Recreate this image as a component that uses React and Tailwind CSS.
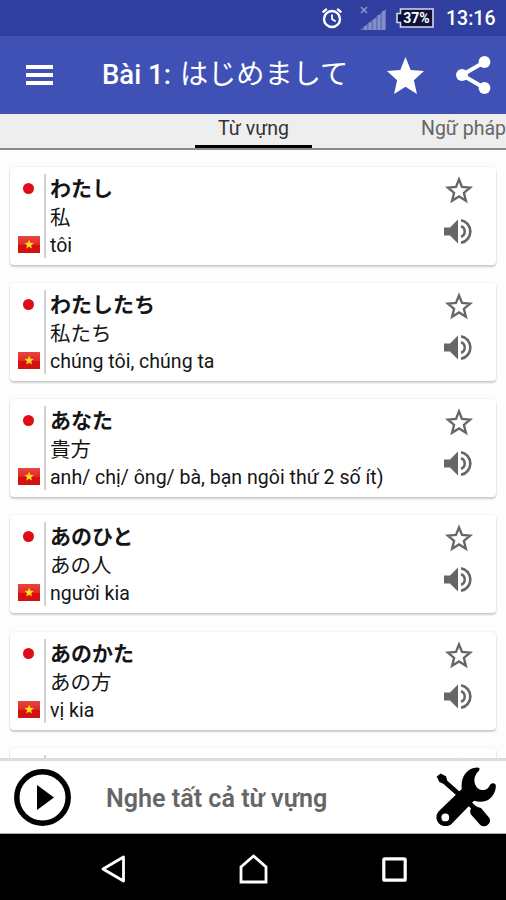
const words = [
  { kana: "わたし", kanji: "私", meaning: "tôi" },
  { kana: "わたしたち", kanji: "私たち", meaning: "chúng tôi, chúng ta" },
  { kana: "あなた", kanji: "貴方", meaning: "anh/ chị/ ông/ bà, bạn ngôi thứ 2 số ít)" },
  { kana: "あのひと", kanji: "あの人", meaning: "người kia" },
  { kana: "あのかた", kanji: "あの方", meaning: "vị kia" },
  { kana: "", kanji: "", meaning: "" },
];

const STAR =
  "M12 17.27L18.18 21l-1.64-7.03L22 9.24l-7.19-.61L12 2 9.19 8.63 2 9.24l5.46 4.73L5.82 21z";

function StatusBar() {
  return (
    <div className="flex h-9 shrink-0 items-center justify-end bg-[#303f9f] pr-[10px] text-white">
      <svg className="h-[22px] w-[22px]" viewBox="0 0 22 22" fill="none" stroke="currentColor">
        <circle cx="11" cy="12" r="8" strokeWidth="2.4" />
        <path d="M1.6 5.4l4.2-3.6M20.4 5.4l-4.2-3.6" strokeWidth="2.2" />
        <path d="M11 7.5V12l3.6 2.6" strokeWidth="1.8" />
      </svg>
      <svg className="ml-[17px] h-[26px] w-[27px]" viewBox="0 0 27 26">
        <path d="M1 2l6 6M7 2L1 8" stroke="#8f98cd" strokeWidth="1.5" />
        <path d="M0 25L26 4v21z" fill="#6672b9" />
        <path
          d="M5.5 21v4M10 17.5v7.5M14.5 14v11M19 10v15M23.5 6v19"
          stroke="#8791c9"
          strokeWidth="2.6"
        />
      </svg>
      <div className="relative ml-[9px] flex h-[20px] w-[38px] items-center justify-center">
        <svg className="absolute inset-0" width="38" height="20" viewBox="0 0 38 20">
          <path
            d="M4.5 1H37v18H4.5v-4.5H1v-9h3.5z"
            fill="#0e1238"
            stroke="#d3d7ee"
            strokeWidth="1.6"
          />
        </svg>
        <span className="relative pl-[3px] text-[14px] leading-none font-bold">37%</span>
      </div>
      <span className="ml-[12px] w-[50px] pt-px text-[19.5px] leading-none font-medium whitespace-nowrap">
        13:16
      </span>
    </div>
  );
}

function AppBar() {
  return (
    <header className="flex h-[78px] shrink-0 items-center bg-[#3f51b5] pr-[15px] pl-[26px] text-white">
      <div className="flex w-[27px] flex-col gap-[4.5px]">
        <div className="h-[3.5px] bg-white" />
        <div className="h-[3.5px] bg-white" />
        <div className="h-[3.5px] bg-white" />
      </div>
      <h1 className="ml-[49px] flex flex-1 items-baseline pt-px text-[27.5px] leading-none font-medium whitespace-nowrap">
        Bài 1:
        <span className="ml-[9px] text-[28.2px] font-normal">はじめまして</span>
      </h1>
      <svg className="h-[37px] w-[37px]" viewBox="2 2 20 19" preserveAspectRatio="none" fill="currentColor">
        <path d={STAR} />
      </svg>
      <svg className="ml-[32px] h-[38px] w-[35px]" viewBox="0 0 35 38" fill="currentColor">
        <path d="M28.5 6L6 19l22.5 13" fill="none" stroke="currentColor" strokeWidth="4" />
        <circle cx="28.5" cy="6" r="5.9" />
        <circle cx="6" cy="19" r="6" />
        <circle cx="28.5" cy="32" r="5.9" />
      </svg>
    </header>
  );
}

function Tabs() {
  return (
    <nav className="flex h-9 shrink-0 overflow-hidden border-b-2 border-[#8b8b8b] bg-[#eee] pl-[195px] text-[19.5px] leading-[30px] whitespace-nowrap">
      <div className="flex w-[117px] shrink-0 flex-col border-b-3 border-black text-center text-[#333]">
        Từ vựng
      </div>
      <div className="ml-[109px] shrink-0 text-[#666]">Ngữ pháp</div>
    </nav>
  );
}

function VietnamFlag() {
  return (
    <svg className="h-[17px] w-[22px]" viewBox="0 0 22 17">
      <defs>
        <linearGradient id="flag" x1="0" y1="0" x2="0" y2="1">
          <stop offset="0" stopColor="#e8453f" />
          <stop offset="0.5" stopColor="#e12a26" />
          <stop offset="0.55" stopColor="#d90d0d" />
          <stop offset="1" stopColor="#cf1414" />
        </linearGradient>
      </defs>
      <rect width="22" height="17" fill="url(#flag)" />
      <path d={STAR} fill="#ffd91a" transform="translate(5.6 2.8) scale(.46)" />
    </svg>
  );
}

function WordCard({ word }) {
  return (
    <div className="mb-[18.3px] flex h-[98px] shrink-0 rounded-[4px] bg-white shadow-[0_2px_2px_rgba(0,0,0,0.18),0_0_2px_rgba(0,0,0,0.12)]">
      <div className="flex w-[34px] flex-col items-center justify-between pt-4 pb-3 pl-[3px]">
        <div className="h-[11px] w-[11px] rounded-full bg-[#e00b18]" />
        <VietnamFlag />
      </div>
      <div className="my-[7px] w-[1.5px] bg-[#d2d2d2]" />
      <div className="flex-1 pt-[7px] pl-[4.5px] whitespace-nowrap text-[#151515]">
        <p className="h-[30px] text-[21px] leading-[30px] font-bold">{word.kana}</p>
        <p className="h-[28px] text-[20.5px] leading-[29px]">{word.kanji}</p>
        <p className="h-[27px] text-[19.55px] leading-[28px]">{word.meaning}</p>
      </div>
      <div className="flex w-[75px] shrink-0 flex-col items-center pt-[9px] text-[#666]">
        <svg className="h-[28px] w-[30px]" viewBox="0 0 27 25" fill="none" stroke="currentColor">
          <path
            d="M13.5 3l2.7 6.8 7.3.6-5.6 4.7 1.800 7.100-6.200-3.900-6.200 3.900 1.800-7.100-5.600-4.700 7.300-.6z"
            strokeWidth="2.100"
          />
        </svg>
        <svg className="mt-[14px] h-[27px] w-[29px]" viewBox="0 0 29 27" fill="none">
          <path d="M0 9.500h6l8-8v24l-8-8H0z" fill="currentColor" />
          <path d="M17 8.300a5.500 5.500 0 0 1 0 10.400" stroke="currentColor" strokeWidth="2.500" />
          <path d="M17 2.200a11.500 11.500 0 0 1 0 22.600" stroke="currentColor" strokeWidth="2.600" />
        </svg>
      </div>
    </div>
  );
}

function ToolsIcon() {
  return (
    <svg className="h-[60px] w-[60px]" viewBox="0 0 60 60">
      <path
        d="M.7 9.500L4.700 6.500 10 9.300l1.300 4.400L36.500 36c2.500 2.500 4.500 4.300 8.500 5l7.600 9c2.500 3 1.500 6-.8 7.700-2.300 2-5.500 2-7.700 0l-8.900-10c-1.500-2-1.300-4.300-.2-6.500L7.300 16.800 3.300 15z"
        fill="black"
      />
      <path
        fillRule="evenodd"
        d="M41.500.4c2.500 0 2.700 2.200 1 3.800C38.500 8 37.500 13 39 17c1.500 4 4 6 7.500 6 4 0 6-2 7.500-5 1.500-2.500 5.500-2.300 5.800.5.300 5-2.500 10.500-6.300 13.500-4 3-10 3.500-15.500 1.700L16 56.500c-3.500 3.500-9.500 3.400-13-.1-3.500-3.500-3.400-9 0-12.400L25.800 22C24.500 12 29 1 41.500.4zM9.300 46.500a3.900 3.900 0 1 0 0 7.800 3.900 3.900 0 0 0 0-7.800z"
        fill="black"
      />
    </svg>
  );
}

function PlayerBar() {
  return (
    <div className="flex h-[76px] shrink-0 items-center border-t-[3px] border-b border-t-[#dcdcdc] border-b-[#aaa] bg-white pr-[10px] pl-[14px]">
      <svg className="h-[57px] w-[57px]" viewBox="0 0 57 57">
        <circle cx="28.5" cy="28.5" r="25.7" fill="none" stroke="black" strokeWidth="5.5" />
        <path d="M23 16v25l17-12.5z" fill="black" />
      </svg>
      <span className="ml-[35px] flex-1 pt-[4px] text-[25.1px] leading-none font-semibold text-[#666]">
        Nghe tất cả từ vựng
      </span>
      <ToolsIcon />
    </div>
  );
}

function NavBar() {
  return (
    <div className="flex h-[66px] shrink-0 items-center bg-black pt-[4px] pl-[100px]">
      <svg className="h-[28px] w-[26px]" viewBox="0 0 26 28" fill="none" stroke="white">
        <path d="M23.5 2v24L3 14z" strokeWidth="2.8" strokeLinejoin="round" />
      </svg>
      <svg className="ml-[113px] h-[30px] w-[29px]" viewBox="0 0 29 30" fill="none" stroke="white">
        <path d="M2 28V13L14.5 2 27 13v15z" strokeWidth="2.8" />
      </svg>
      <svg className="ml-[114px] h-[25px] w-[25px]" viewBox="0 0 25 25" fill="none" stroke="white">
        <rect x="1.8" y="1.8" width="21.4" height="21.4" rx="1" strokeWidth="3.2" />
      </svg>
    </div>
  );
}

export default function App() {
  return (
    <div
      lang="ja"
      className="flex h-[900px] w-[506px] flex-col overflow-hidden bg-white font-[Roboto,'Noto_Sans_CJK_JP',sans-serif]"
    >
      <StatusBar />
      <AppBar />
      <Tabs />
      <main className="flex min-h-0 flex-1 flex-col overflow-hidden bg-[#fdfdfd] px-[10px] pt-[16.5px]">
        {words.map((word, i) => (
          <WordCard key={i} word={word} />
        ))}
      </main>
      <PlayerBar />
      <NavBar />
    </div>
  );
}
